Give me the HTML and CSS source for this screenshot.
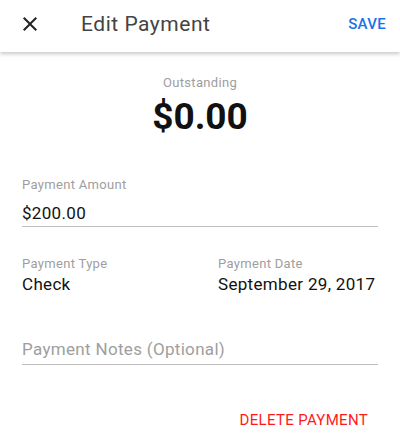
FILE: index.html
```html
<!DOCTYPE html>
<html lang="en">
<head>
  <meta charset="UTF-8">
  <meta name="viewport" content="width=device-width, initial-scale=1.0">
  <title>Edit Payment</title>
  <link rel="stylesheet" href="styles.css">
</head>
<body>
  <div class="toolbar">
    <button class="close-btn" aria-label="Close">
      <svg width="24" height="24" viewBox="0 0 24 24">
        <path d="M19 6.41L17.59 5 12 10.59 6.41 5 5 6.41 10.59 12 5 17.59 6.41 19 12 13.41 17.59 19 19 17.59 13.41 12z" fill="#222"/>
      </svg>
    </button>
    <div class="title">Edit Payment</div>
    <button class="save-btn">SAVE</button>
  </div>

  <div class="content">
    <div class="outstanding-label">Outstanding</div>
    <div class="outstanding-value">$0.00</div>

    <div class="field">
      <div class="field-label">Payment Amount</div>
      <div class="field-input">$200.00</div>
    </div>

    <div class="field-row">
      <div class="field-col">
        <div class="field-label">Payment Type</div>
        <div class="field-text">Check</div>
      </div>
      <div class="field-col">
        <div class="field-label">Payment Date</div>
        <div class="field-text">September 29, 2017</div>
      </div>
    </div>

    <div class="field-input notes">Payment Notes (Optional)</div>

    <div class="actions">
      <button class="delete-btn">DELETE PAYMENT</button>
    </div>
  </div>
</body>
</html>
```
FILE: styles.css
```css
body {
  font-family: Roboto, "Noto Sans", sans-serif;
  margin: 0;
  padding: 0;
  background-color: #fff;
  color: #111;
  letter-spacing: 0.02em;
  overflow: hidden;
}

button {
  background: none;
  border: none;
  padding: 0;
  font-family: inherit;
  letter-spacing: inherit;
  cursor: pointer;
}

.toolbar {
  display: flex;
  align-items: center;
  height: 52px;
  padding: 0 14px 0 18px;
  box-shadow: 0 2px 4px rgba(0, 0, 0, 0.22);
  position: relative;
}

.close-btn {
  width: 24px;
  height: 24px;
  margin-top: -4px;
}

.close-btn svg {
  display: block;
}

.title {
  flex: 1;
  margin-left: 39px;
  margin-top: -4px;
  font-size: 21px;
  letter-spacing: 0.025em;
  color: #444;
}

.save-btn {
  font-size: 15px;
  font-weight: 500;
  color: #1a73e8;
  margin-top: -4px;
}

.content {
  padding: 0 22px;
}

.outstanding-label {
  margin-top: 23px;
  text-align: center;
  font-size: 13px;
  line-height: 16px;
  color: #9e9e9e;
}

.outstanding-value {
  margin-top: 6px;
  text-align: center;
  font-size: 37px;
  font-weight: 700;
  line-height: 40px;
  letter-spacing: 0;
  color: #111;
}

.field {
  margin-top: 40px;
}

.field-label {
  font-size: 13px;
  line-height: 16px;
  color: #9e9e9e;
}

.field-input {
  margin-top: 9px;
  font-size: 17px;
  line-height: 22px;
  padding-bottom: 2px;
  border-bottom: 1px solid #bdbdbd;
}

.field-row {
  display: flex;
  margin-top: 29px;
}

.field-col {
  flex: 1;
}

.field-col + .field-col {
  flex: 0 0 160px;
}

.field-text {
  margin-top: 1px;
  font-size: 17px;
  line-height: 22px;
  color: #111;
}

.notes {
  margin-top: 43px;
  padding-bottom: 4px;
  color: #9e9e9e;
}

.actions {
  display: flex;
  justify-content: flex-end;
  margin-top: 46px;
  padding-right: 10px;
}

.delete-btn {
  font-size: 15px;
  color: #ff1a1a;
}
```
